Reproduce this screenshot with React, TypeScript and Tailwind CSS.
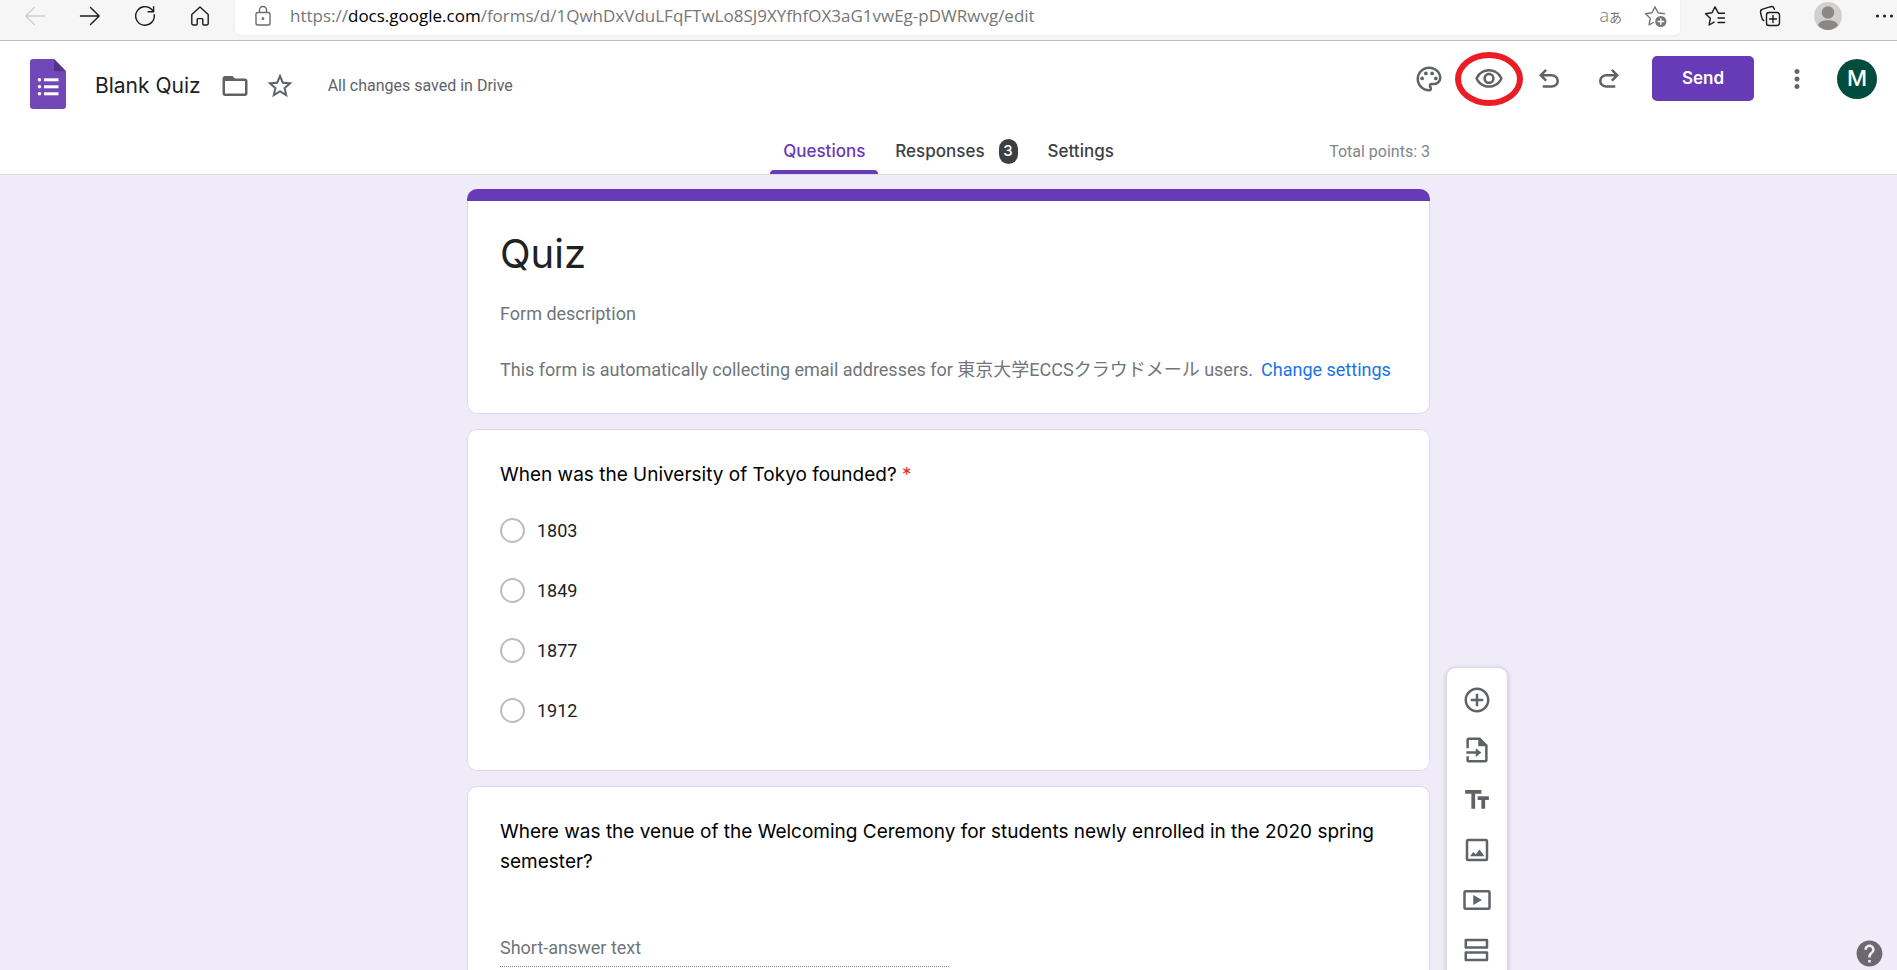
import type { ReactNode } from "react";
import {
  MdAddCircleOutline,
  MdFolderOpen,
  MdHelp,
  MdMoreVert,
  MdOutlinePalette,
  MdOutlineVisibility,
  MdStarOutline,
} from "react-icons/md";

const sans = "font-['Inter',sans-serif]";
const roboto = "font-['Roboto','Noto_Sans_CJK_JP',sans-serif]";

function LineIcon({ children, className = "text-[#1b1b1b]" }: { children: ReactNode; className?: string }) {
  return (
    <svg
      viewBox="0 0 20 20"
      className={`size-5 shrink-0 overflow-visible ${className}`}
      fill="none"
      stroke="currentColor"
      strokeWidth="1.4"
      strokeLinecap="round"
      strokeLinejoin="round"
      aria-hidden="true"
    >
      {children}
    </svg>
  );
}

function FillIcon({ d }: { d: string }) {
  return (
    <svg viewBox="0 0 24 24" className="size-[30px] shrink-0" fill="currentColor" aria-hidden="true">
      <path fillRule="evenodd" d={d} />
    </svg>
  );
}

function BrowserBar() {
  return (
    <div className="flex h-[41px] shrink-0 items-start border-b border-[#bcbcbc] bg-[#f6f6f6] pl-[25px]">
      <div className="flex h-[31px] items-center gap-[35px]">
        <button aria-label="Back">
          <LineIcon className="text-[#cfcfcf]">
            <path d="M19.5 10H1M9.5 1.500 .8 10l8.700 8.500" />
          </LineIcon>
        </button>
        <button aria-label="Forward">
          <LineIcon>
            <path d="M.5 10H19M10.500 1.500l8.700 8.500-8.700 8.500" />
          </LineIcon>
        </button>
        <button aria-label="Reload">
          <LineIcon>
            <path d="M19.2 8.6A9.3 9.3 0 1 1 16.8 3.600L18.500 5.600M18.600.8v5h-5.500" />
          </LineIcon>
        </button>
        <button aria-label="Home">
          <LineIcon>
            <path d="M1.800 8.400 10 1l8.200 7.400v9.200c0 .8-.5 1.400-1.300 1.400h-3.200c-.5 0-.9-.4-.9-.9v-4.700c0-.5-.3-.8-.8-.8H8c-.5 0-.8.3-.8.8v4.700c0 .5-.4.9-.9.9H3.100c-.8 0-1.300-.6-1.300-1.400z" />
          </LineIcon>
        </button>
      </div>

      <div className="ml-[25px] flex h-[35px] min-w-0 flex-1 items-start rounded-b-[5px] bg-white pr-[15px] pl-[18px] shadow-[0_0_3px_rgba(0,0,0,0.08)]">
        <div className="flex h-[31px] min-w-0 flex-1 items-center">
          <LineIcon className="text-[#6b6b6b]">
            <rect x="3" y="6.500" width="14" height="12.500" rx="1.800" />
            <path d="M6.500 6.300V4a3.500 3.500 0 0 1 7 0v2.300" />
            <circle cx="10" cy="12.700" r=".7" fill="currentColor" />
          </LineIcon>
          <p className="ml-[17px] flex-1 truncate font-['Open_Sans',sans-serif] text-[17px] leading-6 text-[#767676]">
            https://<span className="text-black">docs.google.com</span>
            /forms/d/1QwhDxVduLFqFTwLo8SJ9XYfhfOX3aG1vwEg-pDWRwvg/edit
          </p>
          <button
            aria-label="Translate"
            className="flex items-baseline font-['Open_Sans','Noto_Sans_CJK_JP',sans-serif] leading-6 text-[#767676]"
          >
            <span className="text-[18px] font-light">a</span>
            <span className="text-[13px]">あ</span>
          </button>
          <button aria-label="Add to favorites" className="ml-[23px]">
            <LineIcon className="text-[#767676]">
              <path d="M19.500 7.700 13 6.800 10 .8 7 6.800l-6.500.9 4.800 4.600-1.200 6.500 4.400-2.300" />
              <circle cx="15.800" cy="15.500" r="5.600" fill="currentColor" stroke="none" />
              <path d="M15.800 12.700v5.600M13 15.500h5.600" stroke="white" />
            </LineIcon>
          </button>
        </div>
      </div>

      <div className="flex h-[31px] shrink-0 items-center pl-[25px]">
        <button aria-label="Favorites">
          <LineIcon>
            <path d="M19.500 7.300h-6L10 .8 7 6.800l-6.500.9 4.800 4.600-1.200 6.700 5-2.800M13 12h6.500M13 16.500h6.500" />
          </LineIcon>
        </button>
        <button aria-label="Collections" className="ml-[35px]">
          <LineIcon>
            <rect x="6.500" y="6.500" width="13" height="13" rx="2.500" />
            <path d="M13 9.500v7M9.500 13h7M3.800 14.500C2.300 13.800 2 13 1.600 11L.6 6.500c-.4-1.800.4-2.900 2-3.300L10.800.7c1.700-.4 2.800.3 3.300 1.800l.3.900" />
          </LineIcon>
        </button>
        <button aria-label="Profile" className="ml-[34px]">
          <svg viewBox="0 0 28 28" className="size-7" aria-hidden="true">
            <circle cx="14" cy="14" r="14" fill="#d2d0ce" />
            <circle cx="14" cy="10.500" r="6.200" fill="#8a8886" />
            <path d="M3.900 23.500C5 20.500 7.500 18.300 14 18.300s9 2.200 10.100 5.200A14 14 0 0 1 14 28a14 14 0 0 1-10.100-4.500z" fill="#8a8886" />
          </svg>
        </button>
        <button aria-label="More" className="mr-[3px] ml-8">
          <LineIcon>
            <g fill="currentColor" stroke="none">
              <circle cx="3.500" cy="10" r="1.500" />
              <circle cx="10.500" cy="10" r="1.500" />
              <circle cx="17.500" cy="10" r="1.500" />
            </g>
          </LineIcon>
        </button>
      </div>
    </div>
  );
}

function FormsLogo() {
  return (
    <svg viewBox="0 0 36 50" className="h-[50px] w-9 self-start" aria-hidden="true">
      <path d="M3 0h21l12 12.300V47a3 3 0 0 1-3 3H3a3 3 0 0 1-3-3V3a3 3 0 0 1 3-3z" fill="#7248b9" />
      <path d="M24 0l12 12.300H24z" fill="#54338c" />
      <g fill="white">
        <rect x="14" y="19.300" width="14.500" height="3" />
        <rect x="14" y="26.300" width="14.500" height="3" />
        <rect x="14" y="33.300" width="14.500" height="3" />
        <circle cx="9.500" cy="20.800" r="1.800" />
        <circle cx="9.500" cy="27.800" r="1.800" />
        <circle cx="9.500" cy="34.800" r="1.800" />
      </g>
    </svg>
  );
}

const toolButton = "flex h-[60px] w-[60px] items-center justify-center";

function Header() {
  return (
    <header className="shrink-0 border-b border-[#dadce0] bg-white">
      <div className="flex items-start justify-between pr-5 pl-[30px] text-[#5f6368]">
        <div className="flex h-[72px] items-center mt-[18px] pb-[18px]">
          <FormsLogo />
          <h1 className={`ml-[29px] ${sans} text-[21px] leading-7 whitespace-nowrap text-[#202124]`}>Blank Quiz</h1>
          <button aria-label="Move to folder" className="ml-[19px]">
            <MdFolderOpen className="size-[30px]" />
          </button>
          <button aria-label="Star" className="ml-[15px]">
            <MdStarOutline className="size-[30px]" />
          </button>
          <p className={`ml-[33px] ${roboto} text-base whitespace-nowrap`}>All changes saved in Drive</p>
        </div>
        <div className="flex h-[75px] items-center">
          <button aria-label="Customize theme" className={toolButton}>
            <MdOutlinePalette className="size-[30px]" />
          </button>
          <button aria-label="Preview" className={`relative ${toolButton}`}>
            <MdOutlineVisibility className="size-[30px]" />
            <span className="absolute -inset-x-1 inset-y-[3px] rounded-[50%] border-[6px] border-[#ec1c24]" />
          </button>
          <button aria-label="Undo" className={toolButton}>
            <FillIcon d="M7 19v-2h7.100q1.575 0 2.738-1T18 13.500 16.838 11 14.100 10H7.800l2.600 2.600L9 14 4 9l5-5 1.400 1.400L7.800 8h6.300q2.425 0 4.163 1.575T20 13.500t-1.737 3.925T14.100 19z" />
          </button>
          <button aria-label="Redo" className={toolButton}>
            <FillIcon d="M17 19v-2H9.900q-1.575 0-2.738-1T6 13.500 7.162 11 9.900 10h6.300l-2.600 2.600L15 14l5-5-5-5-1.400 1.400L16.200 8H9.900Q7.475 8 5.737 9.575T4 13.500t1.737 3.925T9.900 19z" />
          </button>
          <button className={`ml-[13px] h-[45px] w-[102px] rounded-[5px] bg-[#673ab7] ${sans} text-[17px] font-semibold text-white`}>
            Send
          </button>
          <button aria-label="More options" className="ml-7">
            <MdMoreVert className="size-[30px]" />
          </button>
          <button
            aria-label="Account"
            className={`ml-[25px] size-10 rounded-full bg-[#004d40] ${sans} text-[22px] font-medium text-white`}
          >
            M
          </button>
        </div>
      </div>

      <div className="mx-auto grid h-[43px] w-full max-w-[963px] grid-cols-[1fr_auto_1fr] items-stretch">
        <nav className={`col-start-2 flex gap-1 ${sans} text-[17px] font-medium text-[#3c4043]`}>
          <a href="#questions" className="relative flex items-center px-[13px] pb-[2px] text-[#673ab7]">
            Questions
            <span className="absolute inset-x-0 bottom-0 h-1 rounded-t-[4px] bg-[#673ab7]" />
          </a>
          <a href="#responses" className="flex items-center gap-[14px] px-[13px] pb-[2px]">
            Responses
            <span className="flex h-[25px] w-[19px] items-center justify-center rounded-full bg-[#3c4043] text-[15px] text-white">
              3
            </span>
          </a>
          <a href="#settings" className="flex items-center px-[13px] pb-[2px]">
            Settings
          </a>
        </nav>
        <p className={`self-center pb-[2px] text-right ${roboto} text-base text-[#80868b]`}>Total points: 3</p>
      </div>
    </header>
  );
}

const tools: { label: string; icon: ReactNode }[] = [
  { label: "Add question", icon: <MdAddCircleOutline className="size-[30px]" /> },
  {
    label: "Import questions",
    icon: (
      <FillIcon d="M5.500 2H14.500l6 6V20a2 2 0 0 1-2 2h-13a2 2 0 0 1-2-2v-3h2v3h13V9H13V4H5.500v6.500h-2V4a2 2 0 0 1 2-2zM3.500 13H11v-2.500l4.500 3.500-4.500 3.500V15H3.500z" />
    ),
  },
  { label: "Add title and description", icon: <FillIcon d="M2.500 4v3h5v12h3V7h5V4h-13zm19 5h-9v3h3v7h3v-7h3V9z" /> },
  {
    label: "Add image",
    icon: (
      <FillIcon d="M5 3h14a2 2 0 0 1 2 2v14a2 2 0 0 1-2 2H5a2 2 0 0 1-2-2V5a2 2 0 0 1 2-2zm0 2v14h14V5zM6.500 17l2.500-3.500 2 2 3-4 4 5.500z" />
    ),
  },
  {
    label: "Add video",
    icon: (
      <FillIcon d="M3 4h18a2 2 0 0 1 2 2v12a2 2 0 0 1-2 2H3a2 2 0 0 1-2-2V6a2 2 0 0 1 2-2zm0 2v12h18V6zM9 8l7 4-7 4z" />
    ),
  },
  {
    label: "Add section",
    icon: (
      <FillIcon d="M3 3h17a1 1 0 0 1 1 1v6a1 1 0 0 1-1 1H3a1 1 0 0 1-1-1V4a1 1 0 0 1 1-1zm1 2v4h15V5zM3 13h17a1 1 0 0 1 1 1v6a1 1 0 0 1-1 1H3a1 1 0 0 1-1-1v-6a1 1 0 0 1 1-1zm1 2v4h15v-4z" />
    ),
  },
];

function Toolbar() {
  return (
    <aside className="absolute top-[478px] left-full ml-4 flex w-[62px] flex-col rounded-[10px] border border-[#dadce0] bg-white py-[7px] text-[#5f6368] shadow-[0_1px_4px_rgba(60,64,67,0.25)]">
      {tools.map((tool) => (
        <button key={tool.label} aria-label={tool.label} className="flex h-[50px] items-center justify-center">
          {tool.icon}
        </button>
      ))}
    </aside>
  );
}

const card = "rounded-[10px] border border-[#dadce0] bg-white px-8";
const question = `${sans} text-[19px] leading-[30px] text-black`;

export default function App() {
  return (
    <div className="flex h-screen flex-col bg-[#f0ebf8]">
      <BrowserBar />
      <Header />
      <main className="min-h-0 flex-1 overflow-hidden pt-[14px]">
        <div className="relative mx-auto flex w-full max-w-[963px] flex-col gap-[15px]">
          <section className="overflow-hidden rounded-[10px]">
            <div className="h-3 bg-[#673ab7]" />
            <div className={`rounded-b-[10px] border border-t-0 border-[#dadce0] bg-white px-8 pt-[29px] pb-[31px] ${roboto} text-[18px] leading-6 text-[#70757a]`}>
              <h2 className={`${sans} text-[40px] leading-[48px] text-[#202124]`}>Quiz</h2>
              <p className="mt-6">Form description</p>
              <p className="mt-8">
                This form is automatically collecting email addresses for 東京大学ECCSクラウドメール users.
                <a href="#change-settings" className="ml-2 text-[#1a73e8]">
                  Change settings
                </a>
              </p>
            </div>
          </section>

          <fieldset className={`${card} pb-[30px]`}>
            <legend className={`float-left w-full pt-[30px] ${question}`}>
              When was the University of Tokyo founded? <span className="text-[#d93025]">*</span>
            </legend>
            <div className="clear-both pt-[10px]">
              {["1803", "1849", "1877", "1912"].map((year) => (
                <label key={year} className={`flex h-[60px] items-center gap-3 ${roboto} text-[18px] text-[#202124]`}>
                  <input
                    type="radio"
                    name="founded"
                    value={year}
                    className="size-[25px] appearance-none rounded-full border-2 border-[#bdbdbd] bg-white"
                  />
                  {year}
                </label>
              ))}
            </div>
          </fieldset>

          <section className={`${card} pt-[30px] pb-[60px]`}>
            <label htmlFor="venue" className={`block ${question}`}>
              Where was the venue of the Welcoming Ceremony for students newly enrolled in the 2020 spring semester?
            </label>
            <input
              id="venue"
              type="text"
              placeholder="Short-answer text"
              className={`mt-[59px] block h-[31px] w-1/2 border-b border-dotted border-[#80868b] pb-2 ${roboto} text-[18px] text-[#202124] placeholder:text-[#70757a]`}
            />
          </section>

          <Toolbar />
        </div>
      </main>
      <button aria-label="Help" className="fixed right-3 bottom-px text-[#6b6870]">
        <MdHelp className="size-[31px]" />
      </button>
    </div>
  );
}
